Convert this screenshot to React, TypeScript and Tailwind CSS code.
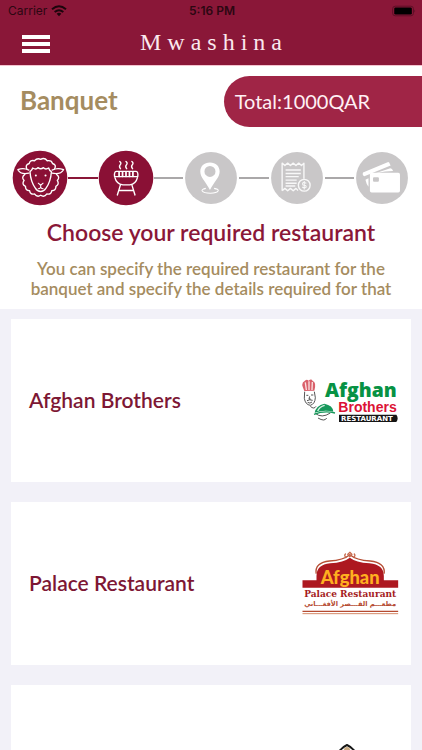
import type { ReactNode } from "react";

function WifiIcon() {
  return (
    <svg viewBox="0 0 48 36" className="h-3 w-4" fill="none" stroke="#1c050c" strokeWidth="6" aria-hidden="true">
      <path d="M3 13 Q24 -5 45 13" />
      <path d="M11 21 Q24 10 37 21" />
      <path d="M17 26 Q24 21 31 26 L24 34Z" fill="#1c050c" stroke="none" />
    </svg>
  );
}

function BatteryIcon() {
  return (
    <svg viewBox="0 0 75 36" className="h-3 w-6" aria-hidden="true">
      <rect x="2" y="3" width="65" height="30" rx="8" fill="none" stroke="#5c0f26" strokeWidth="3" />
      <rect x="7" y="7" width="55" height="22" rx="4" fill="#000" />
      <path d="M70 13 Q75 18 70 23Z" fill="#5c0f26" />
    </svg>
  );
}

function SheepIcon() {
  return (
    <g fill="none" stroke="#fff" strokeWidth="4" strokeLinecap="round" strokeLinejoin="round">
      <path d="M43 55 Q37 43 50 39 Q52 28 65 31 Q73 22 83 27 Q94 21 102 31 Q115 29 117 39 Q130 43 123 55" />
      <path d="M49 58 Q32 50 17 57 Q25 72 49 67" />
      <path d="M116 58 Q132 50 149 57 Q141 72 116 67" />
      <path d="M52 63 Q58 58 60 52 Q70 58 75 51 Q83 58 91 51 Q97 58 106 52 Q108 59 114 63 Q112 92 98 111 Q92 120 83 120 Q73 120 68 111 Q54 92 52 63Z" />
      <path d="M37 71 Q26 79 35 88 Q27 99 39 105 Q38 117 51 118 Q53 130 65 127 Q73 138 83 131 Q93 138 101 127 Q113 130 115 118 Q128 117 127 105 Q138 99 131 88 Q140 79 129 71" />
      <path d="M76 96 L83 102 L90 96 M83 102 V108 M76 112 Q80 112 83 108 Q86 112 90 112" strokeWidth="3" />
      <circle cx="69" cy="74" r="3" fill="#fff" stroke="none" />
      <circle cx="97" cy="74" r="3" fill="#fff" stroke="none" />
    </g>
  );
}

function GrillIcon() {
  return (
    <g fill="none" stroke="#fff" strokeWidth="4" strokeLinecap="round" strokeLinejoin="round">
      <path d="M63 33 Q69 38 64 43 Q60 48 65 54 M81 33 Q87 38 82 43 Q78 48 83 54 M98 33 Q104 38 99 43 Q95 48 100 54" />
      <path d="M53 62 H110 Q117 63 115 77 H48 Q46 63 53 62Z" />
      <path d="M61 64 V76 M71 64 V76 M81 64 V76 M91 64 V76 M101 64 V76" strokeWidth="5" />
      <path d="M49 80 Q53 98 72 101 H92 Q110 98 114 80" />
      <path d="M65 101 L56 130 M98 101 L107 130 M61 117 H102" />
    </g>
  );
}

function PinIcon() {
  return (
    <g fill="#fff">
      <path fillRule="evenodd" d="M78 36 C61 36 50 47 50 62 C50 80 67 92 78 116 C89 92 106 80 106 62 C106 47 95 36 78 36Z M78 46 A16 16 0 1 1 78 78 A16 16 0 1 1 78 46Z" />
      <path d="M66 111 Q54 113 55 118 Q60 125 79 125 Q98 125 102 118 Q103 113 90 111" fill="none" stroke="#fff" strokeWidth="3" />
    </g>
  );
}

function ReceiptIcon() {
  return (
    <g fill="none" stroke="#f8f8f8" strokeWidth="4" strokeLinejoin="round">
      <path d="M38 118 V38 L46 45 L54 38 L62 45 L70 38 L78 45 L86 38 L94 45 L101 38 V83 M38 118 L46 111 L54 118 L62 111 L70 118 L78 111 L84 117" />
      <path d="M48 58 H92 M48 68 H92 M48 77 H86 M48 87 H80 M48 96 H80 M48 104 H76" />
      <circle cx="102" cy="102" r="17" />
      <path d="M108 96 Q97 91 97 98 Q97 102 103 102 Q109 103 107 108 Q103 111 96 107 M102 90 V114" strokeWidth="3" />
    </g>
  );
}

function CardsIcon() {
  return (
    <g fill="#fff">
      <path d="M26 65 L99 35 Q102 35 104 41 L106 45 L30 76 Q27 76 25 70Z" />
      <path d="M62 67 L105 53 Q111 54 113 61 L90 62Z" />
      <path d="M33 86 L42 82 V106 Q36 100 33 86Z" />
      <rect x="46" y="66" width="87" height="57" rx="5" />
      <rect x="55" y="79" width="17" height="13" rx="3" fill="#c9c7c8" />
    </g>
  );
}

type StepItem = { name: string; done: boolean; icon: ReactNode };

const steps: StepItem[] = [
  { name: "Banquet", done: true, icon: <SheepIcon /> },
  { name: "Restaurant", done: true, icon: <GrillIcon /> },
  { name: "Location", done: false, icon: <PinIcon /> },
  { name: "Invoice", done: false, icon: <ReceiptIcon /> },
  { name: "Payment", done: false, icon: <CardsIcon /> },
];

function Steps() {
  return (
    <ol className="flex items-center px-3">
      {steps.map((step, i) => (
        <li key={step.name} aria-label={step.name} className={i > 0 ? "flex flex-1 items-center" : "flex items-center"}>
          {i > 0 && <span className={step.done ? "h-0.5 flex-1 bg-[#8a1738]" : "h-0.5 flex-1 bg-[#aaa8a9]"} />}
          <svg viewBox="0 0 162 162" className="size-14 shrink-0" aria-hidden="true">
            <circle cx="81" cy="81" r={step.done ? 79 : 75} fill={step.done ? "#8a1035" : "#c9c7c8"} />
            {step.icon}
          </svg>
        </li>
      ))}
    </ol>
  );
}

function BrothersLogo() {
  return (
    <svg viewBox="0 0 294 132" className="h-11 w-[98px] overflow-visible" role="img" aria-label="Afghan Brothers Restaurant">
      <path d="M10 36 Q-2 12 10 7 Q16 -1 23 5 Q31 -2 35 6 Q47 9 40 35Z" fill="#d9606b" />
      <path d="M13 10 L16 33 M24 7 V33 M34 9 L33 33" stroke="#fbe2e2" strokeWidth="4" />
      <g fill="none" stroke="#333" strokeWidth="2.5">
        <path d="M11 38 L10 58 Q13 77 28 79 Q42 75 43 56 L40 38" />
        <path d="M16 49 H22 M30 48 H37 M26 52 L24 60 H29 M18 65 Q26 60 35 64 M20 70 Q27 75 33 69" />
        <path d="M28 82 Q39 92 45 82 M43 103 Q62 119 88 102 M51 117 Q71 129 77 117" />
      </g>
      <path d="M41 101 Q45 80 70 74 Q96 79 97 98 Q70 91 41 101Z" fill="#16985b" />
      <path d="M50 96 Q55 83 71 79" fill="none" stroke="#dff3e8" strokeWidth="4" />
      <path d="M39 106 Q70 94 102 102" fill="none" stroke="#16985b" strokeWidth="4" />
      <text x="72" y="53" fill="#079244" fontFamily="Open Sans, sans-serif" fontWeight="800" fontSize="58">Afghan</text>
      <text x="112" y="98" fill="#dc1235" fontFamily="Liberation Sans, sans-serif" fontWeight="700" fontSize="42">Brothers</text>
      <path d="M114 107 H286 Q294 118 286 129 H114Z" fill="#151515" />
      <text x="120" y="126" fill="#fff" fontFamily="DejaVu Sans, sans-serif" fontWeight="700" fontSize="21">RESTAURANT</text>
    </svg>
  );
}

function PalaceLogo() {
  return (
    <svg viewBox="0 0 290 189" className="h-[63px] w-[97px] overflow-visible" role="img" aria-label="Afghan Palace Restaurant">
      <path d="M1 85 H43 V72 Q43 38 84 34 Q125 31 143 17 Q161 31 202 34 Q245 38 245 72 V85 H288 V107 H1Z" fill="#ad1820" />
      <path d="M42 65 Q37 32 82 27 Q124 24 143 8 Q162 24 204 27 Q250 32 246 65" fill="none" stroke="#b64e34" strokeWidth="4" />
      <path d="M143 1 L149 7 L143 14 L137 7Z M131 5 Q124 10 132 17 M155 5 Q162 10 154 17" fill="none" stroke="#c7684b" strokeWidth="4" />
      <text x="144" y="97" textAnchor="middle" fill="#ffb01f" fontFamily="Lato, sans-serif" fontWeight="900" fontSize="55">Afghan</text>
      <text x="144" y="136" textAnchor="middle" fill="#a51c22" fontFamily="DejaVu Serif, serif" fontWeight="700" fontSize="27">Palace Restaurant</text>
      <text x="144" y="163" textAnchor="middle" direction="rtl" fill="#b54a30" fontFamily="DejaVu Sans, sans-serif" fontWeight="700" fontSize="20">مطعـــم القـــصر الأفغـــاني</text>
      <path d="M1 178 H288" stroke="#b54a30" strokeWidth="4" />
      <path d="M1 185 H288" stroke="#d68a69" strokeWidth="3" />
    </svg>
  );
}

function DomeLogo() {
  return (
    <svg viewBox="0 0 98 48" className="h-12 w-[98px]" aria-hidden="true">
      <path d="M34 15 Q39 5 46 2 Q53 5 58 15 V46 H34Z" fill="#fff" stroke="#171717" strokeWidth="2" />
      <circle cx="46" cy="7" r="3" fill="#c9aa82" />
    </svg>
  );
}

const restaurants = [
  { id: "brothers", name: "Afghan Brothers", logo: <BrothersLogo /> },
  { id: "palace", name: "Palace Restaurant", logo: <PalaceLogo /> },
  { id: "dome", name: "", logo: <DomeLogo /> },
];

export default function App() {
  return (
    <div className="flex h-screen flex-col overflow-hidden bg-[#f2f1f8] font-[Lato,sans-serif]">
      <header className="shrink-0 border-b border-[#f4c4d0] bg-[#8a1738]">
        <div className="grid h-[22px] grid-cols-3 items-center pr-1.5 pl-2 font-[Inter,sans-serif] text-xs leading-none text-[#2c0712]">
          <span className="flex items-center gap-1">
            Carrier <WifiIcon />
          </span>
          <span className="text-center font-semibold">5:16 PM</span>
          <span className="flex justify-end">
            <BatteryIcon />
          </span>
        </div>
        <div className="grid h-[43px] grid-cols-[28px_1fr_28px] items-center px-[22px]">
          <button type="button" aria-label="Menu" className="flex w-7 flex-col gap-[3px]">
            <span className="h-1 bg-white" />
            <span className="h-1 bg-white" />
            <span className="h-1 bg-white" />
          </button>
          <h1 className="pb-1 pl-1.5 text-center font-['Liberation_Serif',serif] text-2xl leading-none tracking-[6px] text-[#fbe9ee]">Mwashina</h1>
        </div>
      </header>

      <section className="shrink-0 bg-white py-2.5">
        <div className="flex items-center justify-between">
          <h2 className="pb-1 pl-5 text-[26px] leading-8 font-bold text-[#a58c60]">Banquet</h2>
          <p className="w-[47%] rounded-l-full bg-[#a02546] py-3 pl-[11px] text-xl leading-[27px] text-[#fff0f4]">Total:1000QAR</p>
        </div>
        <div className="mt-[23px]">
          <Steps />
        </div>
        <h3 className="mt-2.5 text-center text-[23px] leading-8 font-semibold text-[#8a1738]">Choose your required restaurant</h3>
        <p className="mx-auto mt-[11px] max-w-[370px] text-center text-[17px] leading-5 font-semibold text-[#a58c60]">
          You can specify the required restaurant for the banquet and specify the details required for that
        </p>
      </section>

      <main className="flex flex-1 flex-col gap-5 overflow-y-auto px-[11px] py-2.5 [scrollbar-width:none]">
        {restaurants.map((r) => (
          <button
            key={r.id}
            type="button"
            aria-label={r.name || "Restaurant"}
            className="flex h-[163px] w-full shrink-0 items-center justify-between bg-white pr-3 pl-[18px] text-left text-[21px] font-semibold text-[#7d1734]"
          >
            <span className="pb-0.5">{r.name}</span>
            {r.logo}
          </button>
        ))}
      </main>
    </div>
  );
}
